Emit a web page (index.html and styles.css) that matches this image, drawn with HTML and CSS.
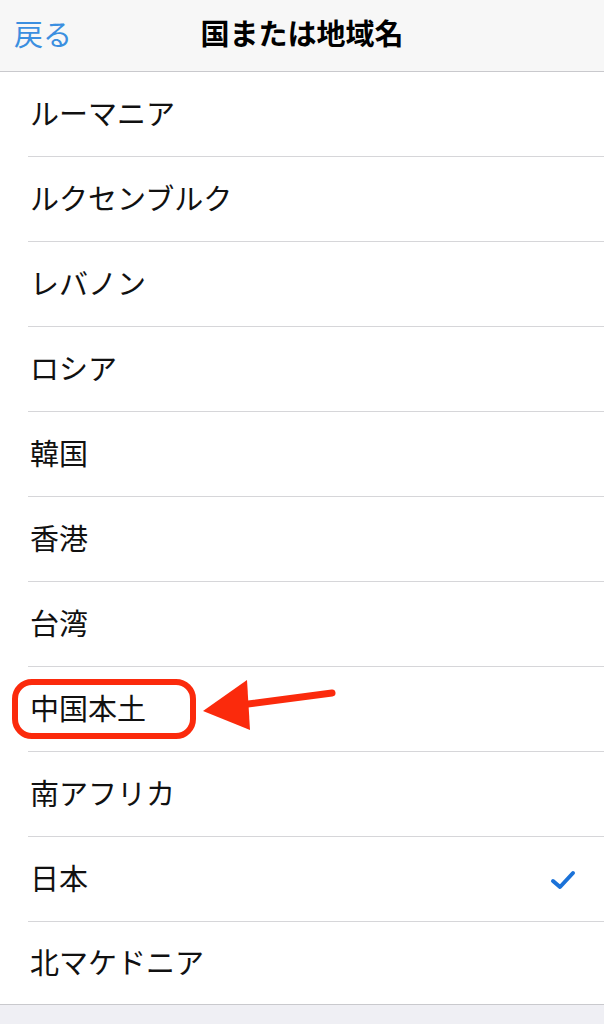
FILE: index.html
```html
<!DOCTYPE html>
<html lang="ja">

<head>
    <meta charset="UTF-8">
    <title>国または地域名</title>
    <link rel="stylesheet" href="styles.css">
</head>

<body>
    <div class="header">
        <a class="back">戻る</a>
        <h1 class="title">国または地域名</h1>
    </div>
    <ul class="list">
        <li class="row"><span class="name">ルーマニア</span></li>
        <li class="row"><span class="name">ルクセンブルク</span></li>
        <li class="row"><span class="name">レバノン</span></li>
        <li class="row"><span class="name">ロシア</span></li>
        <li class="row"><span class="name">韓国</span></li>
        <li class="row"><span class="name">香港</span></li>
        <li class="row"><span class="name">台湾</span></li>
        <li class="row marked">
            <span class="name">中国本土</span>
            <span class="circle"></span>
            <svg class="arrow" width="150" height="60" viewBox="0 0 150 60">
                <line x1="132" y1="18" x2="40" y2="30" stroke="#fb2a0c" stroke-width="7" stroke-linecap="round" />
                <polygon points="3,36 47,5 50,55" fill="#fb2a0c" />
            </svg>
        </li>
        <li class="row"><span class="name">南アフリカ</span></li>
        <li class="row">
            <span class="name">日本</span>
            <svg class="check" width="26" height="22" viewBox="0 0 26 22">
                <polyline points="3,11 10,17 23,3" fill="none" stroke="#1b72d8" stroke-width="4" stroke-linecap="round" stroke-linejoin="round" />
            </svg>
        </li>
        <li class="row last"><span class="name">北マケドニア</span></li>
    </ul>
    <div class="footer"></div>
</body>

</html>
```

FILE: styles.css
```css
* {
    padding: 0;
    margin: 0;
}

body {
    background-color: #fff;
    font-family: "Noto Sans CJK JP", "Noto Sans", sans-serif;
    color: #111;
}

.header {
    display: flex;
    align-items: center;
    justify-content: center;
    position: relative;
    height: 71px;
    background-color: #f7f7f7;
    border-bottom: 1px solid #c9c9cd;
}

.back {
    position: absolute;
    left: 14px;
    top: 13px;
    font-size: 29px;
    line-height: 40px;
    color: #3b8fe0;
}

.title {
    font-size: 29px;
    font-weight: bold;
    line-height: 40px;
    color: #000;
    margin-top: -8px;
}

.list {
    list-style: none;
}

.row {
    position: relative;
    display: flex;
    align-items: center;
    justify-content: space-between;
    height: 84px;
    margin-left: 28px;
    padding-right: 28px;
    border-bottom: 1px solid #d6d6d9;
}

.row.last {
    margin-left: 0;
    padding-left: 28px;
    height: 82px;
    border-bottom-color: #c9c9cd;
}

.name {
    font-size: 29px;
    line-height: 40px;
    margin-left: 2px;
    margin-top: -4px;
}

.check {
    margin-top: 4px;
}

.circle {
    position: absolute;
    left: -16px;
    top: 12px;
    width: 172px;
    height: 48px;
    border: 6px solid #fb2a0c;
    border-radius: 20px;
}

.arrow {
    position: absolute;
    left: 172px;
    top: 8px;
}

.footer {
    height: 40px;
    background-color: #efeff4;
}
```
